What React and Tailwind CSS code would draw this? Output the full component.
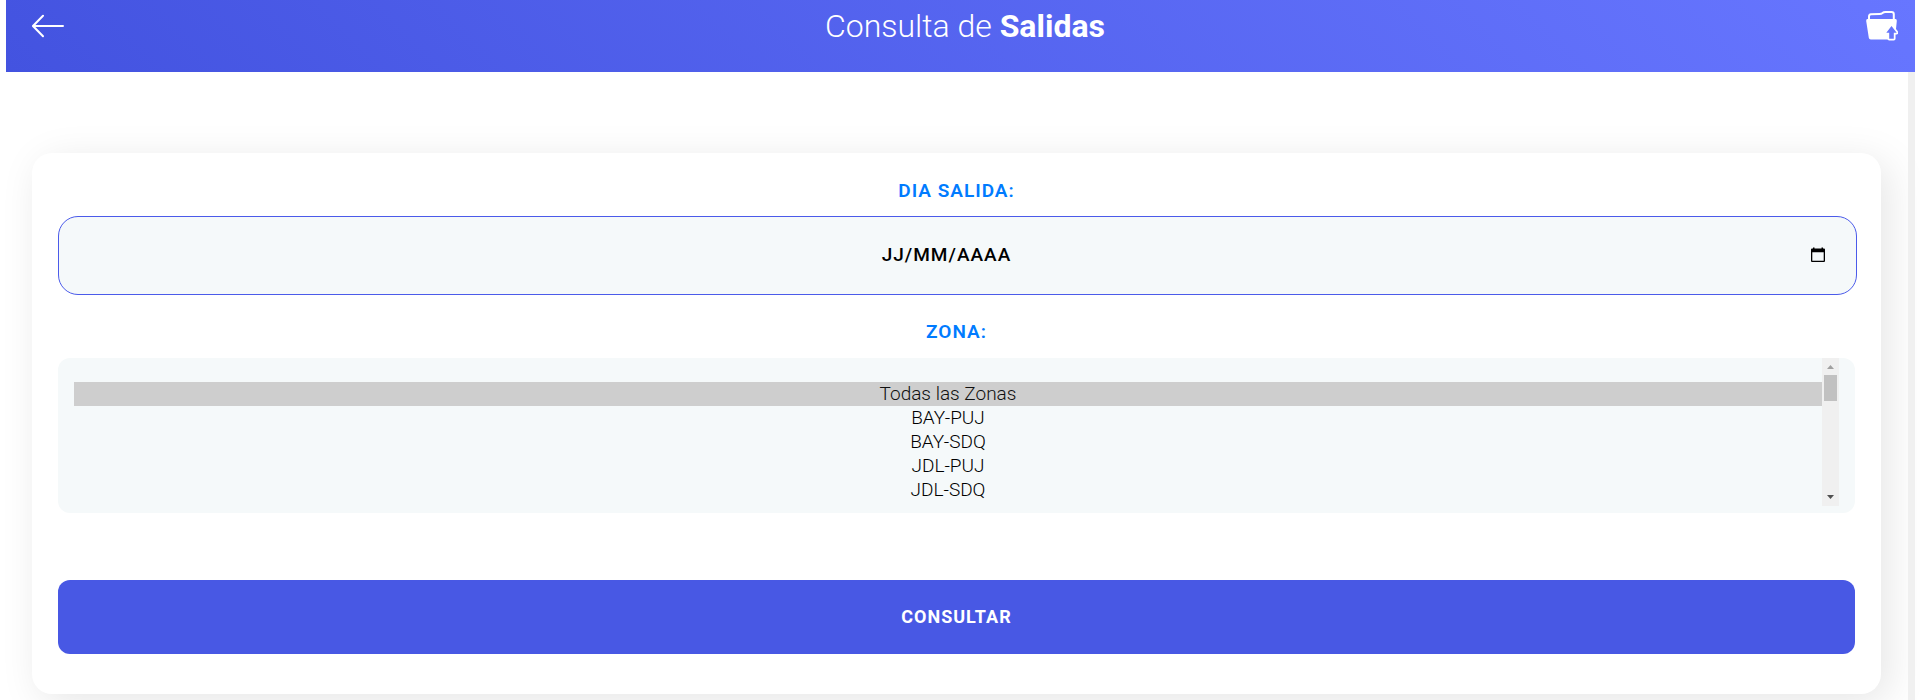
const ZONES = ["Todas las Zonas", "BAY-PUJ", "BAY-SDQ", "JDL-PUJ", "JDL-SDQ"];

function BackIcon() {
  return (
    <svg className="h-6 w-8" viewBox="0 0 32 24" fill="none" stroke="currentColor" strokeWidth="2" strokeLinecap="round" aria-hidden="true">
      <path d="M31 12H1M11 1.700L1 12l10 10.300" />
    </svg>
  );
}

function FolderUploadIcon() {
  return (
    <svg className="h-8 w-8" viewBox="0 0 32 32" aria-hidden="true">
      <path d="M3 10V6.500Q3 4.500 5 4.300L13.500 4Q15.500 3.900 16.500 3Q17.500 2 19.500 2H25.500Q27.800 2 27.800 4.300V10" fill="none" stroke="#fff" strokeWidth="2" />
      <path d="M1.500 9H29.500Q31 9 30.800 11L29.500 24L24 29.500H4.800Q3 29.500 2.800 27.800L0.200 11Q0 9 1.500 9Z" fill="#fff" />
      <path d="M25.500 16L30.700 22.700H27.800V28.800H23.200V22.700H20.300Z" fill="#6675fb" stroke="#fff" strokeWidth="3.500" strokeLinejoin="round" paintOrder="stroke" />
    </svg>
  );
}

function CalendarIcon() {
  return (
    <svg className="h-4 w-4" viewBox="0 0 16 16" aria-hidden="true">
      <path d="M3 0.500h1.500v1h7v-1H13v1h1q1 0 1 1v11.500q0 1-1 1H2q-1 0-1-1V2.500q0-1 1-1h1zM2.300 5.300v8.500h11.400v-8.500z" fill="#000" fillRule="evenodd" />
    </svg>
  );
}

function ScrollRail() {
  return (
    <div className="flex w-[17px] shrink-0 flex-col items-center bg-[#f0f0f0]" aria-hidden="true">
      <svg className="h-[17px] w-[17px]" viewBox="0 0 17 17"><path d="M5 11h7L8.500 7z" fill="#a0a0a0" /></svg>
      <div className="h-[26px] w-[13px] bg-[#c1c1c1]" />
      <svg className="mt-auto h-[17px] w-[17px]" viewBox="0 0 17 17"><path d="M5 6h7L8.500 10z" fill="#505050" /></svg>
    </div>
  );
}

export default function App() {
  return (
    <div className="overflow-hidden bg-white pr-[5px] pl-[6px] font-[Roboto,sans-serif]">
      <header className="relative z-10 flex h-[72px] items-start justify-between bg-linear-[45deg,#4353e0,#6776ff] pr-[17px] pl-[26px] text-white">
        <a href="#volver" aria-label="Volver" className="mt-[14px]"><BackIcon /></a>
        <h1 className="mt-[6px] text-[32px] leading-10 font-light">
          Consulta de <b className="font-bold">Salidas</b>
        </h1>
        <button type="button" aria-label="Abrir carpeta" className="mt-[10px]"><FolderUploadIcon /></button>
      </header>

      <div className="flex">
        <main className="min-w-0 grow pt-[81px] pr-[27px] pb-[7px] pl-[26px]">
          <form className="flex flex-col rounded-[20px] bg-white px-[26px] pt-6 pb-10 text-center shadow-[8px_8px_40px_rgba(0,0,0,0.1)]">
            <label htmlFor="dia" className="text-[19px] leading-7 font-semibold tracking-[1px] text-[#007bff] uppercase">
              Dia salida:
            </label>
            <div className="mt-[11px] -mr-[2px] flex h-[79px] items-center rounded-[20px] border border-[#4b5bea] bg-[#f5f9fa] pr-[30px] pb-[2px] pl-6">
              <input
                id="dia"
                type="text"
                placeholder="JJ/MM/AAAA"
                className="h-full min-w-0 grow bg-transparent text-center text-[19px] font-medium tracking-[1px] text-black outline-none placeholder:text-black"
              />
              <button type="button" aria-label="Abrir calendario"><CalendarIcon /></button>
            </div>

            <label htmlFor="zona" className="mt-[23px] text-[19px] leading-7 font-semibold tracking-[1px] text-[#007bff] uppercase">
              Zona:
            </label>
            <div className="mt-3 flex rounded-xl bg-[#f5f9fa] px-4 pb-[7px]">
              <select
                id="zona"
                size={5}
                defaultValue={ZONES[0]}
                className="h-[148px] min-w-0 grow appearance-none overflow-hidden bg-transparent pt-6 text-center text-[19px] leading-6 text-black outline-none"
              >
                {ZONES.map((zone) => (
                  <option key={zone} className="h-6 min-h-6 p-0 text-center leading-6 font-light checked:bg-[#cecece]">
                    {zone}
                  </option>
                ))}
              </select>
              <ScrollRail />
            </div>

            <button type="button" className="mt-[67px] h-[74px] rounded-xl bg-[#4858e4] text-lg font-bold tracking-[1px] text-white uppercase">
              Consultar
            </button>
          </form>
        </main>
        <div className="z-10 w-[7px] shrink-0 bg-[#f0f0f0]" />
      </div>
    </div>
  );
}
